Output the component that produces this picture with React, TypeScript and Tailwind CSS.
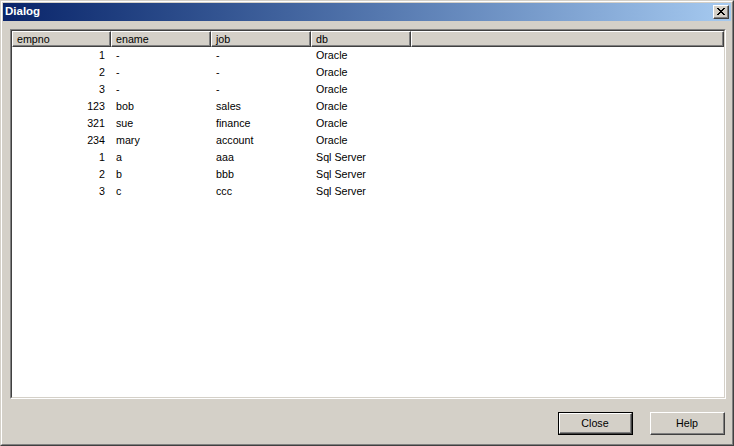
import React from "react"

const rows = [
  { empno: "1", ename: "-", job: "-", db: "Oracle" },
  { empno: "2", ename: "-", job: "-", db: "Oracle" },
  { empno: "3", ename: "-", job: "-", db: "Oracle" },
  { empno: "123", ename: "bob", job: "sales", db: "Oracle" },
  { empno: "321", ename: "sue", job: "finance", db: "Oracle" },
  { empno: "234", ename: "mary", job: "account", db: "Oracle" },
  { empno: "1", ename: "a", job: "aaa", db: "Sql Server" },
  { empno: "2", ename: "b", job: "bbb", db: "Sql Server" },
  { empno: "3", ename: "c", job: "ccc", db: "Sql Server" },
]

const columns = [
  { label: "empno", width: "w-[99px]" },
  { label: "ename", width: "w-[100px]" },
  { label: "job", width: "w-[100px]" },
  { label: "db", width: "w-[100px]" },
]

function HeaderCell({ label, width }: { label?: string; width?: string }) {
  return (
    <div
      className={`h-full border-t border-l border-t-white border-l-white border-r border-b border-r-[#404040] border-b-[#404040] ${width ?? "flex-1"}`}
    >
      <div className="h-full border-r border-b border-r-[#808080] border-b-[#808080] pl-[4px] leading-[14px]">
        {label}
      </div>
    </div>
  )
}

function Button({ label, isDefault }: { label: string; isDefault?: boolean }) {
  return (
    <div className={`w-[75px] h-[23px] ${isDefault ? "border border-black" : ""}`}>
      <div className="h-full border-t border-l border-t-white border-l-white border-r border-b border-r-[#404040] border-b-[#404040]">
        <div className="h-full flex items-center justify-center border-r border-b border-r-[#808080] border-b-[#808080]">
          {label}
        </div>
      </div>
    </div>
  )
}

export default function App() {
  return (
    <div className="w-[734px] h-[446px] bg-[#D4D0C8] border-t border-l border-t-[#D4D0C8] border-l-[#D4D0C8] border-r border-b border-r-[#404040] border-b-[#404040] font-['Liberation_Sans',Arial,sans-serif] text-[10.7px] text-black">
      <div className="h-full flex flex-col border-t border-l border-t-white border-l-white border-r border-b border-r-[#808080] border-b-[#808080] p-[1px]">
        {/* title bar */}
        <div className="h-[18px] flex items-center justify-between bg-gradient-to-r from-[#0A246A] to-[#A6CAF0] pl-[2px] pr-[2px]">
          <span className="text-white font-bold text-[11.5px]">Dialog</span>
          <div className="w-[16px] h-[14px] bg-[#D4D0C8] border-t border-l border-t-white border-l-white border-r border-b border-r-[#404040] border-b-[#404040]">
            <div className="h-full flex items-center justify-center border-r border-b border-r-[#808080] border-b-[#808080]">
              <svg width="8" height="7" viewBox="0 0 8 7" shapeRendering="crispEdges">
                <path
                  d="M0 0h2v1h-2zM6 0h2v1h-2zM1 1h2v1h-2zM5 1h2v1h-2zM2 2h4v1h-4zM3 3h2v1h-2zM2 4h4v1h-4zM1 5h2v1h-2zM5 5h2v1h-2zM0 6h2v1h-2zM6 6h2v1h-2z"
                  fill="#000"
                />
              </svg>
            </div>
          </div>
        </div>

        {/* list view */}
        <div className="mt-[8px] ml-[7px] mr-[5px] h-[370px] border-t border-l border-t-[#808080] border-l-[#808080] border-r border-b border-r-white border-b-white">
          <div className="h-full flex flex-col bg-white border-t border-l border-t-[#404040] border-l-[#404040] border-r border-b border-r-[#D4D0C8] border-b-[#D4D0C8]">
            <div className="h-[16px] flex bg-[#D4D0C8]">
              {columns.map((c) => (
                <HeaderCell key={c.label} label={c.label} width={c.width} />
              ))}
              <HeaderCell />
            </div>
            <div className="flex flex-col">
              {rows.map((r, i) => (
                <div key={i} className="h-[17px] flex items-center">
                  <div className="w-[99px] text-right pr-[6px]">{r.empno}</div>
                  <div className="w-[100px] pl-[5px]">{r.ename}</div>
                  <div className="w-[100px] pl-[5px]">{r.job}</div>
                  <div className="w-[100px] pl-[5px]">{r.db}</div>
                </div>
              ))}
            </div>
          </div>
        </div>

        {/* buttons */}
        <div className="flex justify-end gap-[17px] mt-[13px] mr-[6px]">
          <Button label="Close" isDefault />
          <Button label="Help" />
        </div>
      </div>
    </div>
  )
}
